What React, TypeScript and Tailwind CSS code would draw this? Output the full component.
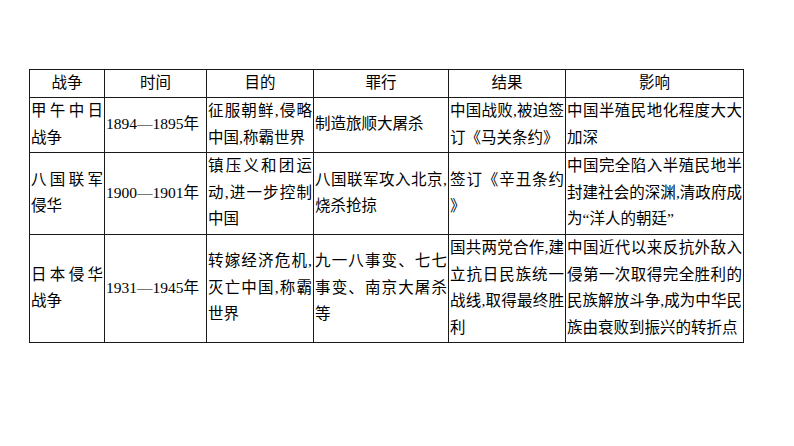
type Cell = { lines: string[] };

const head = ["战争", "时间", "目的", "罪行", "结果", "影响"];

const rows: { h: string; cells: Cell[] }[] = [
  {
    h: "h-[55px]",
    cells: [
      { lines: ["甲午中日", "战争"] },
      { lines: ["1894—1895年"] },
      { lines: ["征服朝鲜,侵略", "中国,称霸世界"] },
      { lines: ["制造旅顺大屠杀"] },
      { lines: ["中国战败,被迫签", "订《马关条约》"] },
      { lines: ["中国半殖民地化程度大大", "加深"] },
    ],
  },
  {
    h: "h-[82px]",
    cells: [
      { lines: ["八国联军", "侵华"] },
      { lines: ["1900—1901年"] },
      { lines: ["镇压义和团运", "动,进一步控制", "中国"] },
      { lines: ["八国联军攻入北京,", "烧杀抢掠"] },
      { lines: ["签订《辛丑条约", "》"] },
      { lines: ["中国完全陷入半殖民地半", "封建社会的深渊,清政府成", "为“洋人的朝廷”"] },
    ],
  },
  {
    h: "h-[108px]",
    cells: [
      { lines: ["日本侵华", "战争"] },
      { lines: ["1931—1945年"] },
      { lines: ["转嫁经济危机,", "灭亡中国,称霸", "世界"] },
      { lines: ["九一八事变、七七", "事变、南京大屠杀", "等"] },
      { lines: ["国共两党合作,建", "立抗日民族统一", "战线,取得最终胜", "利"] },
      { lines: ["中国近代以来反抗外敌入", "侵第一次取得完全胜利的", "民族解放斗争,成为中华民", "族由衰败到振兴的转折点"] },
    ],
  },
];

const widths = ["w-[75px]", "w-[102px]", "w-[107px]", "w-[135px]", "w-[117px]", "w-[178px]"];

export default function App() {
  return (
    <div
      className="w-[794px] h-[446px] bg-white pt-[69px] pl-[29px] text-black text-[15.5px] leading-[26.5px]"
      style={{ fontFamily: '"Liberation Serif", "Noto Sans CJK SC", sans-serif' }}
    >
      <table className="table-fixed border-collapse w-[715px]">
        <colgroup>
          {widths.map((w, i) => (
            <col key={i} className={w} />
          ))}
        </colgroup>
        <thead>
          <tr className="h-[26px]">
            {head.map((t) => (
              <th key={t} className="border border-[#1a1a1a] font-normal text-center p-0">
                {t}
              </th>
            ))}
          </tr>
        </thead>
        <tbody>
          {rows.map((r, ri) => (
            <tr key={ri} className={r.h}>
              {r.cells.map((c, ci) => (
                <td key={ci} className="border border-[#1a1a1a] align-middle px-[1px] py-0">
                  {c.lines.map((l, li) => (
                    <div
                      key={li}
                      className={
                        li < c.lines.length - 1
                          ? "whitespace-nowrap text-justify [text-align-last:justify]"
                          : "whitespace-nowrap text-left"
                      }
                    >
                      {l}
                    </div>
                  ))}
                </td>
              ))}
            </tr>
          ))}
        </tbody>
      </table>
    </div>
  );
}
